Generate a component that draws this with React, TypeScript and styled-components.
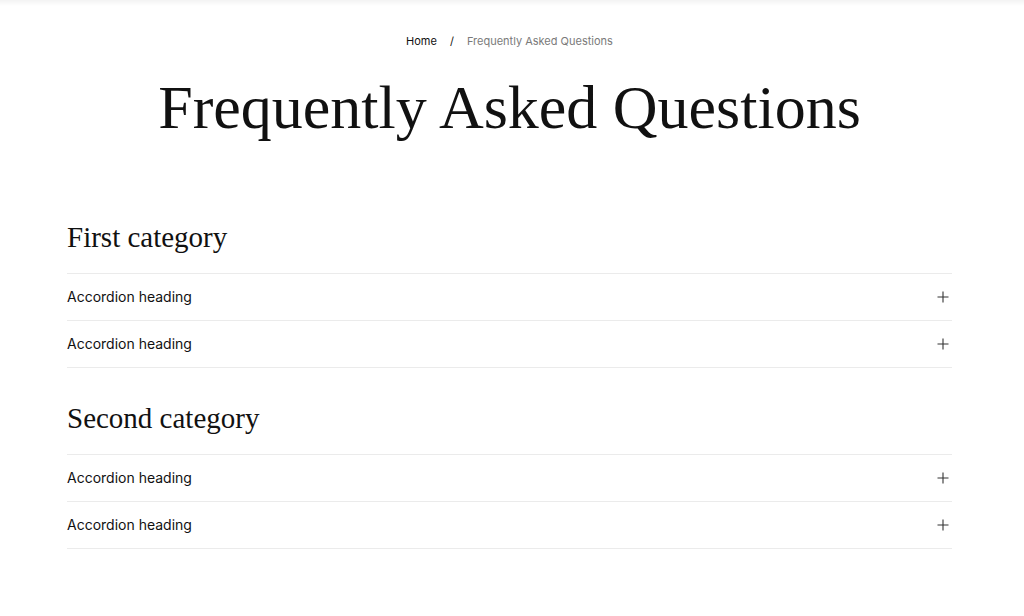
import styled, { createGlobalStyle } from "styled-components";

const GlobalStyle = createGlobalStyle`
  html, body {
    margin: 0;
    padding: 0;
    background: #ffffff;
  }
  body {
    font-family: Inter, "Liberation Sans", sans-serif;
    color: #111111;
  }
`;

const TopShade = styled.div`
  height: 6px;
  background: linear-gradient(#f3f3f3, #ffffff);
`;

const Page = styled.main`
  padding-right: 5px;
`;

const Container = styled.div`
  width: 885px;
  margin: 0 auto;
`;

const Breadcrumb = styled.nav`
  display: flex;
  justify-content: center;
  align-items: center;
  gap: 13px;
  margin-top: 27px;
  font-size: 11px;
  line-height: 16px;
`;

const Crumb = styled.span<{ $muted?: boolean }>`
  color: ${(p) => (p.$muted ? "#7a7a7a" : "#111111")};
`;

const Title = styled.h1`
  margin: 22px 0 0;
  text-align: center;
  font-family: "Liberation Serif", serif;
  font-weight: 400;
  font-size: 62px;
  line-height: 72px;
  color: #111111;
`;

const Section = styled.section<{ $top: number }>`
  margin-top: ${(p) => p.$top}px;
`;

const CategoryTitle = styled.h2`
  margin: 0 0 19px;
  font-family: "Liberation Serif", serif;
  font-weight: 400;
  font-size: 29px;
  line-height: 34px;
  color: #111111;
`;

const List = styled.ul`
  list-style: none;
  margin: 0;
  padding: 0;
  border-top: 1px solid #ebebeb;
`;

const Item = styled.li`
  border-bottom: 1px solid #ebebeb;
`;

const Header = styled.button`
  display: flex;
  width: 100%;
  height: 46px;
  align-items: center;
  justify-content: space-between;
  padding: 0 3px 1px 0;
  border: none;
  background: none;
  font-family: Inter, "Liberation Sans", sans-serif;
  font-size: 14px;
  color: #111111;
  cursor: pointer;
`;

const PlusIcon = () => (
  <svg width="12" height="12" viewBox="0 0 12 12" fill="none">
    <path d="M6 0.5V11.5M0.5 6H11.5" stroke="#333" strokeWidth="1.1" />
  </svg>
);

const categories = [
  { name: "First category", items: ["Accordion heading", "Accordion heading"] },
  { name: "Second category", items: ["Accordion heading", "Accordion heading"] },
];

export default function App() {
  return (
    <>
      <GlobalStyle />
      <TopShade />
      <Page>
        <Container>
          <Breadcrumb>
            <Crumb>Home</Crumb>
            <Crumb>/</Crumb>
            <Crumb $muted>Frequently Asked Questions</Crumb>
          </Breadcrumb>
          <Title>Frequently Asked Questions</Title>
          {categories.map((c, i) => (
            <Section key={c.name} $top={i === 0 ? 77 : 33}>
              <CategoryTitle>{c.name}</CategoryTitle>
              <List>
                {c.items.map((it, j) => (
                  <Item key={j}>
                    <Header>
                      {it}
                      <PlusIcon />
                    </Header>
                  </Item>
                ))}
              </List>
            </Section>
          ))}
        </Container>
      </Page>
    </>
  );
}
